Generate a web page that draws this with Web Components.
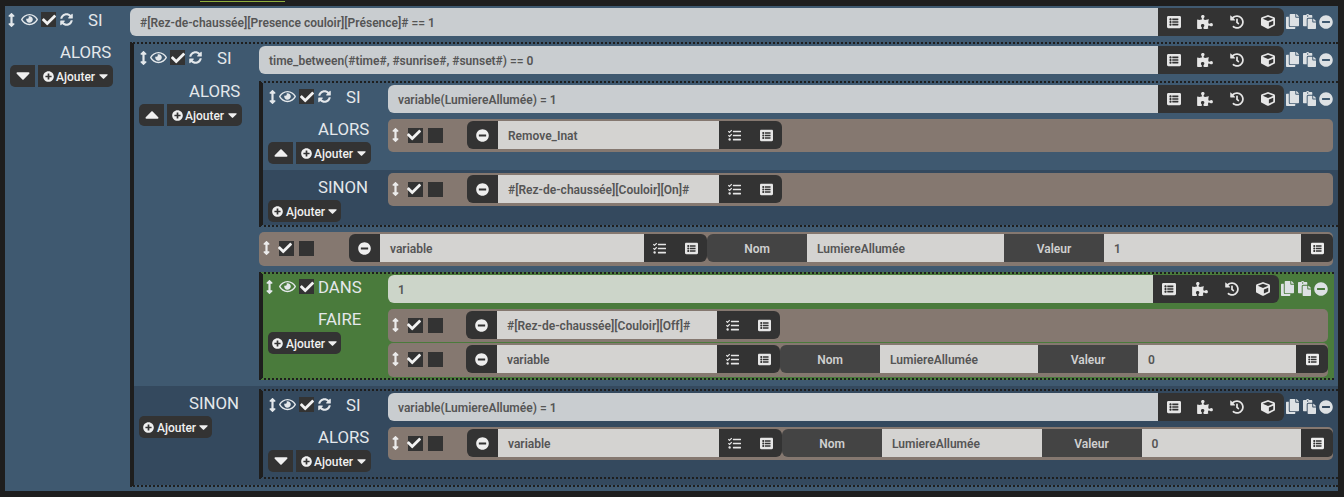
<!DOCTYPE html>
<html lang="fr">
<head>
<meta charset="utf-8">
<title>Scénario</title>
<style>
    html, body { margin: 0; height: 497px; overflow: hidden; background: #1e1e1e; }
    body { font-family: Roboto, "Liberation Sans", sans-serif; }
</style>
</head>
<body>
<scn-page>
    <scn-head origin="3" lead="5" label="SI" expr="#[Rez-de-chaussée][Presence couloir][Présence]# == 1" refresh></scn-head>
    <scn-section label="ALORS" caret="down" add="75" top="6" bottom="0">
        <scn-frame bar bottom>
            <scn-head origin="6" lead="2" label="SI" expr="time_between(#time#, #sunrise#, #sunset#) == 0" refresh></scn-head>
            <scn-section label="ALORS" caret="up" add="75" top="7" bottom="6">
                <scn-frame bar bottom>
                    <scn-head origin="6" lead="3" label="SI" expr="variable(LumiereAllumée) = 1" refresh></scn-head>
                    <scn-section label="ALORS" caret="up" add="75" top="6" bottom="6">
                        <scn-action lead="79" width="315" text="Remove_Inat"></scn-action>
                    </scn-section>
                    <scn-section label="SINON" tone="else" add="73" top="3" label-top="7" bottom="3">
                        <scn-action lead="79" width="315" text="#[Rez-de-chaussée][Couloir][On]#"></scn-action>
                    </scn-section>
                </scn-frame>
                <scn-action class="wide" lead="90" width="358" text="variable" name="LumiereAllumée" value="1" tall></scn-action>
                <scn-frame bar bottom green>
                    <scn-head origin="3" lead="5" label="DANS" expr="1"></scn-head>
                    <scn-section label="FAIRE" add="73" top="6" bottom="1">
                        <scn-action lead="78" width="314" text="#[Rez-de-chaussée][Couloir][Off]#"></scn-action>
                        <scn-action class="next" lead="78" width="314" text="variable" name="LumiereAllumée" value="0" tall></scn-action>
                    </scn-section>
                </scn-frame>
            </scn-section>
            <scn-section label="SINON" tone="else" add="73" top="3" label-top="7" bottom="6">
                <scn-frame bar bottom>
                    <scn-head origin="6" lead="3" label="SI" expr="variable(LumiereAllumée) = 1" refresh></scn-head>
                    <scn-section label="ALORS" caret="down" add="75" top="6" bottom="5">
                        <scn-action lead="79" width="315" text="variable" name="LumiereAllumée" value="0"></scn-action>
                    </scn-section>
                </scn-frame>
            </scn-section>
        </scn-frame>
    </scn-section>
</scn-page>

<script>
    // Icon shapes, keyed by name: [viewBox, path]
    const ICONS = {
        check: ['0 0 512 512', 'M173.898 439.404l-166.4-166.4c-9.997-9.997-9.997-26.206 0-36.204l36.203-36.204c9.997-9.998 26.207-9.998 36.204 0L192 312.69 432.095 72.596c9.997-9.997 26.207-9.997 36.204 0l36.203 36.204c9.997 9.997 9.997 26.206 0 36.204l-294.4 294.401c-9.998 9.997-26.207 9.997-36.204-.001z'],
        eye: ['0 0 576 512', 'M288 144a110.94 110.94 0 0 0-31.24 5 55.4 55.4 0 0 1 7.24 27 56 56 0 0 1-56 56 55.4 55.4 0 0 1-27-7.24A111.71 111.71 0 1 0 288 144zm284.52 97.4C518.29 135.59 410.93 64 288 64S57.68 135.64 3.48 241.41a32.35 32.35 0 0 0 0 29.19C57.71 376.41 165.07 448 288 448s230.32-71.64 284.52-177.41a32.35 32.35 0 0 0 0-29.19zM288 400c-98.65 0-189.09-55-237.93-144C98.91 167 189.34 112 288 112s189.09 55 237.93 144C477.1 345 386.66 400 288 400z'],
        sync: ['0 0 512 512', 'M370.72 133.28C339.458 104.008 298.888 87.962 255.848 88c-77.458.068-144.328 53.178-162.791 126.85-1.344 5.363-6.122 9.15-11.651 9.15H24.103c-7.498 0-13.194-6.807-11.807-14.176C33.933 94.924 134.813 8 256 8c66.448 0 126.791 26.136 171.315 68.685L463.03 40.97C478.149 25.851 504 36.559 504 57.941V192c0 13.255-10.745 24-24 24H345.941c-21.382 0-32.09-25.851-16.971-40.971l41.75-41.749zM32 296h134.059c21.382 0 32.09 25.851 16.971 40.971l-41.75 41.75c31.262 29.273 71.835 45.319 114.876 45.28 77.418-.07 144.315-53.144 162.787-126.849 1.344-5.363 6.122-9.15 11.651-9.15h57.304c7.498 0 13.193 6.807 11.807 14.176C478.067 417.076 377.187 504 256 504c-66.448 0-126.791-26.136-171.315-68.685L48.97 471.03C33.851 486.149 8 475.441 8 454.059V320c0-13.255 10.745-24 24-24z'],
        arrows: ['0 0 256 512', 'M214.059 377.941H168V134.059h46.059c21.382 0 32.09-25.851 16.971-40.971L144.971 7.029c-9.373-9.373-24.569-9.373-33.941 0L24.971 93.088c-15.119 15.119-4.411 40.971 16.971 40.971H88v243.882H41.941c-21.382 0-32.09 25.851-16.971 40.971l86.059 86.059c9.373 9.373 24.569 9.373 33.941 0l86.059-86.059c15.12-15.119 4.412-40.971-16.97-40.971z'],
        plus: ['0 0 512 512', 'M256 8C119 8 8 119 8 256s111 248 248 248 248-111 248-248S393 8 256 8zm144 276c0 6.6-5.4 12-12 12h-92v92c0 6.6-5.4 12-12 12h-56c-6.6 0-12-5.4-12-12v-92h-92c-6.6 0-12-5.4-12-12v-56c0-6.6 5.4-12 12-12h92v-92c0-6.6 5.4-12 12-12h56c6.6 0 12 5.4 12 12v92h92c6.6 0 12 5.4 12 12v56z'],
        minus: ['0 0 512 512', 'M256 8C119 8 8 119 8 256s111 248 248 248 248-111 248-248S393 8 256 8zM124 296c-6.6 0-12-5.4-12-12v-56c0-6.6 5.4-12 12-12h264c6.6 0 12 5.4 12 12v56c0 6.6-5.4 12-12 12H124z'],
        down: ['0 185 320 180', 'M31.3 192h257.3c17.8 0 26.7 21.5 14.1 34.1L174.1 354.8c-7.8 7.8-20.5 7.8-28.3 0L17.2 226.1C4.6 213.5 13.5 192 31.3 192z'],
        up: ['0 177 320 180', 'M288.662 352H31.338c-17.818 0-26.741-21.543-14.142-34.142l128.662-128.662c7.81-7.81 20.474-7.81 28.284 0l128.662 128.662c12.6 12.599 3.676 34.142-14.142 34.142z'],
        list: ['0 0 512 512', 'M464 480H48c-26.51 0-48-21.49-48-48V80c0-26.51 21.49-48 48-48h416c26.51 0 48 21.49 48 48v352c0 26.51-21.49 48-48 48zM128 120c-22.091 0-40 17.909-40 40s17.909 40 40 40 40-17.909 40-40-17.909-40-40-40zm0 96c-22.091 0-40 17.909-40 40s17.909 40 40 40 40-17.909 40-40-17.909-40-40-40zm0 96c-22.091 0-40 17.909-40 40s17.909 40 40 40 40-17.909 40-40-17.909-40-40-40zm288-136v-32c0-6.627-5.373-12-12-12H204c-6.627 0-12 5.373-12 12v32c0 6.627 5.373 12 12 12h200c6.627 0 12-5.373 12-12zm0 96v-32c0-6.627-5.373-12-12-12H204c-6.627 0-12 5.373-12 12v32c0 6.627 5.373 12 12 12h200c6.627 0 12-5.373 12-12zm0 96v-32c0-6.627-5.373-12-12-12H204c-6.627 0-12 5.373-12 12v32c0 6.627 5.373 12 12 12h200c6.627 0 12-5.373 12-12z'],
        puzzle: ['0 0 576 512', 'M519.442 288.651c-41.519 0-59.5 31.593-82.058 31.593C377.409 320.244 432 144 432 144s-196.288 80-196.288-3.297c0-35.827 36.288-46.25 36.288-85.985C272 19.216 243.885 0 210.539 0c-34.654 0-66.366 18.891-66.366 56.346 0 41.364 31.711 59.277 31.711 81.75C175.885 207.719 0 166.758 0 166.758v333.237s178.635 41.047 178.635-28.662c0-22.473-40-40.107-40-81.471 0-37.456 29.25-56.346 63.577-56.346 33.673 0 61.788 19.216 61.788 54.717 0 39.735-36.288 50.158-36.288 85.985 0 60.803 129.675 25.73 181.23 25.73 0 0-34.725-120.101 25.827-120.101 35.962 0 46.423 36.152 86.308 36.152C556.712 416 576 387.99 576 354.443c0-34.199-18.962-65.792-56.558-65.792z'],
        history: ['0 0 512 512', 'M504 255.531c.253 136.64-111.18 248.372-247.82 248.468-59.015.042-113.223-20.53-155.822-54.911-11.077-8.94-11.905-25.541-1.839-35.607l11.267-11.267c8.609-8.609 22.353-9.551 31.891-1.984C173.062 425.135 212.781 440 256 440c101.705 0 184-82.311 184-184 0-101.705-82.311-184-184-184-48.814 0-93.149 18.969-126.068 49.932l50.754 50.754c10.08 10.08 2.941 27.314-11.313 27.314H24c-8.837 0-16-7.163-16-16V38.627c0-14.254 17.234-21.393 27.314-11.314l49.372 49.372C129.209 34.136 189.552 8 256 8c136.81 0 247.747 110.78 248 247.531zm-180.912 78.784l9.823-12.63c8.138-10.463 6.253-25.542-4.21-33.679L288 256.349V152c0-13.255-10.745-24-24-24h-16c-13.255 0-24 10.745-24 24v135.651l65.409 50.874c10.463 8.137 25.541 6.253 33.679-4.21z'],
        cube: ['0 0 512 512', 'M239.1 6.3l-208 78c-18.7 7-31.1 25-31.1 45v225.1c0 18.2 10.3 34.8 26.5 42.9l208 104c13.5 6.8 29.4 6.8 42.9 0l208-104c16.3-8.1 26.5-24.8 26.5-42.9V129.3c0-20-12.4-37.9-31.1-44.9l-208-78C262 2.2 250 2.2 239.1 6.3zM256 68.4l192 72v1.1l-192 78-192-78v-1.1l192-72zm32 356V275.5l160-65v133.9l-160 80z'],
        tasks: ['0 0 512 512', 'M139.61 35.5a12 12 0 0 0-17 0L58.93 98.81l-22.7-22.12a12 12 0 0 0-17 0L3.53 92.41a12 12 0 0 0 0 17l47.59 47.4a12.78 12.78 0 0 0 17.61 0l15.59-15.62L156.52 69a12.09 12.09 0 0 0 .09-17zm0 159.19a12 12 0 0 0-17 0l-63.68 63.72-22.7-22.1a12 12 0 0 0-17 0L3.53 252a12 12 0 0 0 0 17L51 316.5a12.77 12.77 0 0 0 17.6 0l15.7-15.69 72.2-72.22a12 12 0 0 0 .09-16.9zM64 368c-26.49 0-48.59 21.5-48.59 48S37.53 464 64 464a48 48 0 0 0 0-96zm432 16H208a16 16 0 0 0-16 16v32a16 16 0 0 0 16 16h288a16 16 0 0 0 16-16v-32a16 16 0 0 0-16-16zm0-320H208a16 16 0 0 0-16 16v32a16 16 0 0 0 16 16h288a16 16 0 0 0 16-16V80a16 16 0 0 0-16-16zm0 160H208a16 16 0 0 0-16 16v32a16 16 0 0 0 16 16h288a16 16 0 0 0 16-16v-32a16 16 0 0 0-16-16z'],
        copy: ['0 0 448 512', 'M320 448v40c0 13.255-10.745 24-24 24H24c-13.255 0-24-10.745-24-24V120c0-13.255 10.745-24 24-24h72v296c0 30.879 25.121 56 56 56h168zm0-344V0H152c-13.255 0-24 10.745-24 24v368c0 13.255 10.745 24 24 24h272c13.255 0 24-10.745 24-24V128H344c-13.2 0-24-10.8-24-24zm120.971-31.029L375.029 7.029A24 24 0 0 0 358.059 0H352v96h96v-6.059a24 24 0 0 0-7.029-16.97z'],
        paste: ['0 0 448 512', 'M128 184c0-30.879 25.122-56 56-56h136V56c0-13.255-10.745-24-24-24h-80.61C204.306 12.89 183.637 0 160 0s-44.306 12.89-55.39 32H24C10.745 32 0 42.745 0 56v336c0 13.255 10.745 24 24 24h104V184zm32-144c13.255 0 24 10.745 24 24s-10.745 24-24 24-24-10.745-24-24 10.745-24 24-24zm184 248h104v200c0 13.255-10.745 24-24 24H184c-13.255 0-24-10.745-24-24V184c0-13.255 10.745-24 24-24h136v104c0 13.2 10.8 24 24 24zm104-38.059V256h-96v-96h6.059a24 24 0 0 1 16.97 7.029l65.942 65.941a24.002 24.002 0 0 1 7.029 16.971z']
    };

    function icon(name, w, h) {
        const [box, d] = ICONS[name];
        return `<svg width="${w}" height="${h}" viewBox="${box}" fill="currentColor" style="display:block;flex:none"><path d="${d}"/></svg>`;
    }

    function checkbox(checked) {
        const mark = checked ? icon('check', 14, 14) : '';
        return `<span style="display:flex;align-items:center;justify-content:center;width:15px;height:15px;flex:none;background:#333;color:#f2f2f2">${mark}</span>`;
    }

    // Page shell: top strip plus the blue scenario panel
    class ScnPage extends HTMLElement {
        constructor() {
            super();
            this.attachShadow({mode: 'open'});
            this.shadowRoot.innerHTML = `
                <style>
                    :host { display: block; }
                    #strip { height: 5px; padding-top: 1px; }
                    #strip div { width: 85px; height: 1px; margin-left: 200px; background: #8fae3c; }
                    #panel { margin-left: 5px; width: 1333px; padding: 2px 0 4px; box-sizing: border-box; background: #3f5970; }
                </style>
                <div id="strip"><div></div></div>
                <div id="panel"><slot></slot></div>`;
        }
    }

    // A block frame: dotted edges and a dark bar on the left
    class ScnFrame extends HTMLElement {
        constructor() {
            super();
            this.attachShadow({mode: 'open'});
            this.shadowRoot.innerHTML = `
                <style>
                    :host { display: block; border-top: 2px dotted #1e1e1e; padding-top: 2px; }
                    :host([bar]) { border-left: 4px solid #1e1e1e; }
                    :host([bottom]) { border-bottom: 2px dotted #1e1e1e; }
                    :host([green]) {
                        margin: 6px 4px 0 0;
                        padding-top: 1px;
                        background: #4a7b3c;
                        --end: 6px;
                        --expr-bg: #ccd5c9;
                    }
                </style>
                <slot></slot>`;
        }
    }

    // Block header: handle, eye, check, label, expression and its tools
    class ScnHead extends HTMLElement {
        constructor() {
            super();
            this.attachShadow({mode: 'open'});
        }

        connectedCallback() {
            const refresh = this.hasAttribute('refresh');
            const origin = this.getAttribute('origin');
            const label = this.getAttribute('label');
            const tools = ['list', 'puzzle', 'history', 'cube']
                .map(n => `<span class="tool">${icon(n, n === 'puzzle' ? 16 : 14, 14)}</span>`).join('');
            this.shadowRoot.innerHTML = `
                <style>
                    :host { display: block; }
                    #row { display: flex; height: 28px; }
                    #left {
                        flex: none; width: 125px; box-sizing: border-box;
                        display: flex; align-items: center; height: 15px; margin-top: 4px;
                        color: #e4e8eb;
                    }
                    #grab { flex: none; width: 36px; box-sizing: border-box; display: flex; align-items: center; justify-content: space-between; padding: 0 3px 0 ${origin}px; }
                    #sync { margin-left: 4px; }
                    #label { font-size: 16.8px; line-height: 15px; padding-top: 1px; margin-left: ${refresh ? 15 : 4}px; }
                    #expr {
                        flex: 1; min-width: 0; display: flex; align-items: center; box-sizing: border-box; padding: 2px 0 0 10px;
                        font: 600 12px Roboto, "Liberation Sans", sans-serif; color: #555;
                        background: var(--expr-bg, #c9cdd0); border-radius: 6px 0 0 6px;
                    }
                    #tools { flex: none; width: 126px; display: flex; background: #333; border-radius: 0 6px 6px 0; color: #e6e6e6; }
                    .tool { flex: 1; display: flex; align-items: center; justify-content: center; }
                    #more { flex: none; display: flex; align-items: center; gap: 3.5px; margin: 0 var(--end, 5px) 0 2px; color: #dde1e4; padding-bottom: 1px; }
                </style>
                <div id="row">
                    <div id="left">
                        <div id="grab">${icon('arrows', 7, 14)}${icon('eye', 17, 15)}</div>
                        ${checkbox(true)}
                        ${refresh ? `<span id="sync">${icon('sync', 13, 13)}</span>` : ''}
                        <span id="label">${label}</span>
                    </div>
                    <div id="expr">${this.getAttribute('expr')}</div>
                    <div id="tools">${tools}</div>
                    <div id="more">${icon('copy', 13, 15)}${icon('paste', 13, 15)}${icon('minus', 14, 14)}</div>
                </div>`;
        }
    }

    // Labelled part of a block (ALORS, SINON, FAIRE) with its add button
    class ScnSection extends HTMLElement {
        constructor() {
            super();
            this.attachShadow({mode: 'open'});
        }

        connectedCallback() {
            const top = this.getAttribute('top');
            const labelTop = this.getAttribute('label-top') || top;
            const caret = this.getAttribute('caret');
            this.shadowRoot.innerHTML = `
                <style>
                    :host { display: grid; grid-template-columns: 125px minmax(0, 1fr); padding-bottom: ${this.getAttribute('bottom')}px; }
                    :host([tone="else"]) { background: #34495e; }
                    #left { padding-top: ${labelTop}px; }
                    #label { font-size: 16.8px; line-height: 20px; height: 20px; margin: 0 0 3px 55px; color: #e4e8eb; }
                    #buttons { display: flex; gap: 3px; margin-left: 5px; height: 22px; color: #f0f0f0; }
                    #caret { flex: none; width: 25px; display: flex; align-items: center; justify-content: center; background: #333; border-radius: 5px 0 0 5px; }
                    #add {
                        flex: none; width: ${this.getAttribute('add')}px; box-sizing: border-box; padding: 0 4px;
                        display: flex; align-items: center; justify-content: space-between;
                        background: #333; border-radius: 5px; font-size: 12px; font-weight: 500;
                    }
                    #add span { padding-top: 2px; }
                    #caret + #add { border-radius: 0 5px 5px 0; padding: 0 5px; }
                    #caret + #add span { margin-right: 2px; }
                    #body { padding-top: ${top}px; min-width: 0; }
                </style>
                <div id="left">
                    <div id="label">${this.getAttribute('label')}</div>
                    <div id="buttons">
                        ${caret ? `<span id="caret">${icon(caret, 14, 8)}</span>` : ''}
                        <span id="add">${icon('plus', 11, 11)}<span>Ajouter</span>${icon('down', 9, 5)}</span>
                    </div>
                </div>
                <div id="body"><slot></slot></div>`;
        }
    }

    // Brown action row, with optional name/value arguments
    class ScnAction extends HTMLElement {
        constructor() {
            super();
            this.attachShadow({mode: 'open'});
        }

        connectedCallback() {
            const name = this.getAttribute('name');
            const args = name === null ? '' : `
                <span class="tag first">Nom</span>
                <span class="val">${name}</span>
                <span class="tag">Valeur</span>
                <span class="val">${this.getAttribute('value')}</span>
                <span class="btn last">${icon('list', 13, 13)}</span>`;
            this.shadowRoot.innerHTML = `
                <style>
                    :host { display: block; margin-right: var(--end, 5px); }
                    :host(.wide) { margin-top: 5px; }
                    :host(.next) { margin-top: 1px; }
                    #row {
                        display: flex; height: 28px; padding: 2px 0 ${this.hasAttribute('tall') ? 4 : 3}px;
                        background: #857870; border-radius: 5px;
                        font: 600 12px Roboto, "Liberation Sans", sans-serif;
                    }
                    #ctl {
                        flex: none; width: ${this.getAttribute('lead')}px; box-sizing: border-box; padding-left: 4px;
                        display: flex; align-items: center; gap: 5px; color: #ececec;
                    }
                    #ctl svg:first-child { margin-right: 4px; }
                    #expr { flex: none; width: ${this.getAttribute('width')}px; display: flex; }
                    .btn { flex: none; width: 31px; display: flex; align-items: center; justify-content: center; background: #333; color: #eee; }
                    .lead { border-radius: 6px 0 0 6px; }
                    .val { flex: 1; min-width: 0; display: flex; align-items: center; padding: 2px 0 0 10px; background: #d4d3d1; color: #555; }
                    #tools { flex: none; width: 63px; display: flex; background: #333; border-radius: 0 6px 6px 0; color: #e6e6e6; }
                    #tools span { flex: 1; display: flex; align-items: center; justify-content: center; }
                    .tag { flex: none; width: 100px; box-sizing: border-box; padding-top: 2px; display: flex; align-items: center; justify-content: center; background: #444; color: #d0d0d0; }
                    .first { border-radius: 6px 0 0 6px; }
                    .last { width: 32px; border-radius: 0 5px 5px 0; }
                </style>
                <div id="row">
                    <div id="ctl">${icon('arrows', 7, 14)}${checkbox(true)}${checkbox(false)}</div>
                    <div id="expr">
                        <span class="btn lead">${icon('minus', 13, 13)}</span>
                        <span class="val">${this.getAttribute('text')}</span>
                        <span id="tools"><span>${icon('tasks', 13, 13)}</span><span>${icon('list', 13, 13)}</span></span>
                    </div>
                    ${args}
                </div>`;
        }
    }

    window.customElements.define('scn-page', ScnPage);
    window.customElements.define('scn-frame', ScnFrame);
    window.customElements.define('scn-head', ScnHead);
    window.customElements.define('scn-section', ScnSection);
    window.customElements.define('scn-action', ScnAction);
</script>
</body>
</html>
